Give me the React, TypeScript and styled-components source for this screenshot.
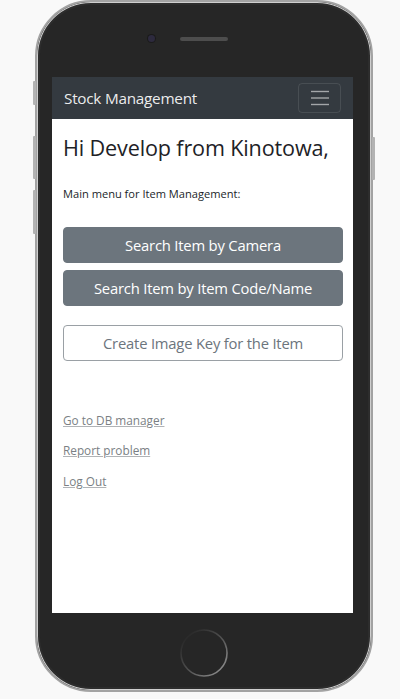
import React from "react";
import styled, { createGlobalStyle } from "styled-components";

const Global = createGlobalStyle`
  html, body { margin: 0; padding: 0; background: #f9f9f9; }
  body { font-family: "Open Sans", "Noto Sans", sans-serif; }
  * { box-sizing: border-box; }
`;

const Stage = styled.div`
  width: 400px;
  height: 699px;
  padding: 0 0 0 35px;
  display: flex;
  align-items: flex-start;
  background: #f9f9f9;
`;

const Phone = styled.div`
  position: relative;
  width: 338px;
  height: 692px;
  border-radius: 56px;
  border: 2px solid #a3a3a3;
  box-shadow: inset 0 0 0 1px #cfcfcf, inset 0 0 0 3px #2d2d2d;
  background: #262626;
  display: flex;
  flex-direction: column;
  padding: 0 18px 0 15px;
`;

const SideButton = styled.span<{ $side: "left" | "right"; $top: number; $h: number }>`
  position: absolute;
  ${(p) => (p.$side === "left" ? "left: -4px;" : "right: -4px;")}
  top: ${(p) => p.$top}px;
  width: 3px;
  height: ${(p) => p.$h}px;
  background: #b3b3b3;
  border-radius: 1px;
`;

const TopBezel = styled.div`
  height: 75px;
  display: grid;
  grid-template-columns: 1fr auto 1fr;
  align-items: center;
`;

const Camera = styled.span`
  justify-self: end;
  margin-right: 22px;
  margin-top: -3px;
  width: 7px;
  height: 7px;
  border-radius: 50%;
  background: #2d2a3e;
  box-shadow: 0 0 0 1px #1b1b1b;
`;

const Speaker = styled.span`
  margin-top: -1px;
  margin-left: 3px;
  width: 48px;
  height: 4px;
  border-radius: 2px;
  background: #4d4d4d;
`;

const Screen = styled.div`
  width: 301px;
  height: 536px;
  background: #ffffff;
  display: flex;
  flex-direction: column;
  overflow: hidden;
`;

const Navbar = styled.nav`
  height: 42px;
  flex: none;
  background: #343a40;
  display: flex;
  align-items: center;
  justify-content: space-between;
  padding: 0 12px;
`;

const Brand = styled.span`
  color: rgba(255, 255, 255, 0.92);
  font-size: 15.3px;
  letter-spacing: -0.25px;
`;

const Toggler = styled.button`
  width: 43px;
  height: 30px;
  border: 1px solid rgba(255, 255, 255, 0.1);
  border-radius: 4px;
  background: transparent;
  display: flex;
  align-items: center;
  justify-content: center;
  padding: 0;
`;

const Content = styled.main`
  padding: 16px 11px 0 11px;
  display: flex;
  flex-direction: column;
`;

const Heading = styled.h3`
  margin: 0;
  font-size: 21.6px;
  font-weight: 400;
  color: #1e2226;
  line-height: 1.2;
  letter-spacing: -0.15px;
`;

const Lead = styled.p`
  margin: 25px 0 0 0;
  font-size: 11.1px;
  color: #212529;
  line-height: 1.5;
`;

const ButtonStack = styled.div`
  margin-top: 24px;
  display: flex;
  flex-direction: column;
  gap: 7px;
`;

const Btn = styled.button<{ $outline?: boolean }>`
  width: 280px;
  height: 36px;
  border-radius: 4px;
  font-family: inherit;
  font-size: 14.8px;
  letter-spacing: -0.2px;
  padding: 0;
  border: 1px solid ${(p) => (p.$outline ? "#9aa0a5" : "#6c757d")};
  background: ${(p) => (p.$outline ? "#ffffff" : "#6c757d")};
  color: ${(p) => (p.$outline ? "#6c757d" : "#ffffff")};
  margin-top: ${(p) => (p.$outline ? "12px" : "0")};
`;

const Links = styled.div`
  margin-top: 50px;
  display: flex;
  flex-direction: column;
  gap: 12.5px;
`;

const Link = styled.a`
  font-size: 11.8px;
  color: #7a7f84;
  text-decoration: underline;
  text-decoration-color: #b0b3b6;
  line-height: 18px;
  align-self: flex-start;
`;

const BottomBezel = styled.div`
  flex: 1;
  display: flex;
  justify-content: center;
  padding-top: 15px;
  padding-left: 3px;
`;

const HomeButton = () => (
  <svg width="50" height="50" viewBox="0 0 50 50">
    <defs>
      <linearGradient id="hb" x1="0.1" y1="0.1" x2="0.9" y2="0.9">
        <stop offset="0" stopColor="#262626" />
        <stop offset="0.5" stopColor="#4e4e4e" />
        <stop offset="1" stopColor="#8c8c8c" />
      </linearGradient>
    </defs>
    <circle cx="25" cy="25" r="23" fill="none" stroke="url(#hb)" strokeWidth="1.6" />
  </svg>
);

const Hamburger = () => (
  <svg width="20" height="16" viewBox="0 0 20 16">
    <g stroke="rgba(255,255,255,0.55)" strokeWidth="1.4">
      <line x1="1" y1="1.5" x2="19" y2="1.5" />
      <line x1="1" y1="8" x2="19" y2="8" />
      <line x1="1" y1="14.5" x2="19" y2="14.5" />
    </g>
  </svg>
);

export default function App() {
  return (
    <>
      <Global />
      <Stage>
        <Phone>
          <SideButton $side="left" $top={79} $h={24} />
          <SideButton $side="left" $top={134} $h={43} />
          <SideButton $side="left" $top={188} $h={44} />
          <SideButton $side="right" $top={135} $h={43} />
          <TopBezel>
            <Camera />
            <Speaker />
            <span />
          </TopBezel>
          <Screen>
            <Navbar>
              <Brand>Stock Management</Brand>
              <Toggler aria-label="menu">
                <Hamburger />
              </Toggler>
            </Navbar>
            <Content>
              <Heading>Hi Develop from Kinotowa,</Heading>
              <Lead>Main menu for Item Management:</Lead>
              <ButtonStack>
                <Btn>Search Item by Camera</Btn>
                <Btn>Search Item by Item Code/Name</Btn>
                <Btn $outline>Create Image Key for the Item</Btn>
              </ButtonStack>
              <Links>
                <Link href="#">Go to DB manager</Link>
                <Link href="#">Report problem</Link>
                <Link href="#">Log Out</Link>
              </Links>
            </Content>
          </Screen>
          <BottomBezel>
            <HomeButton />
          </BottomBezel>
        </Phone>
      </Stage>
    </>
  );
}
